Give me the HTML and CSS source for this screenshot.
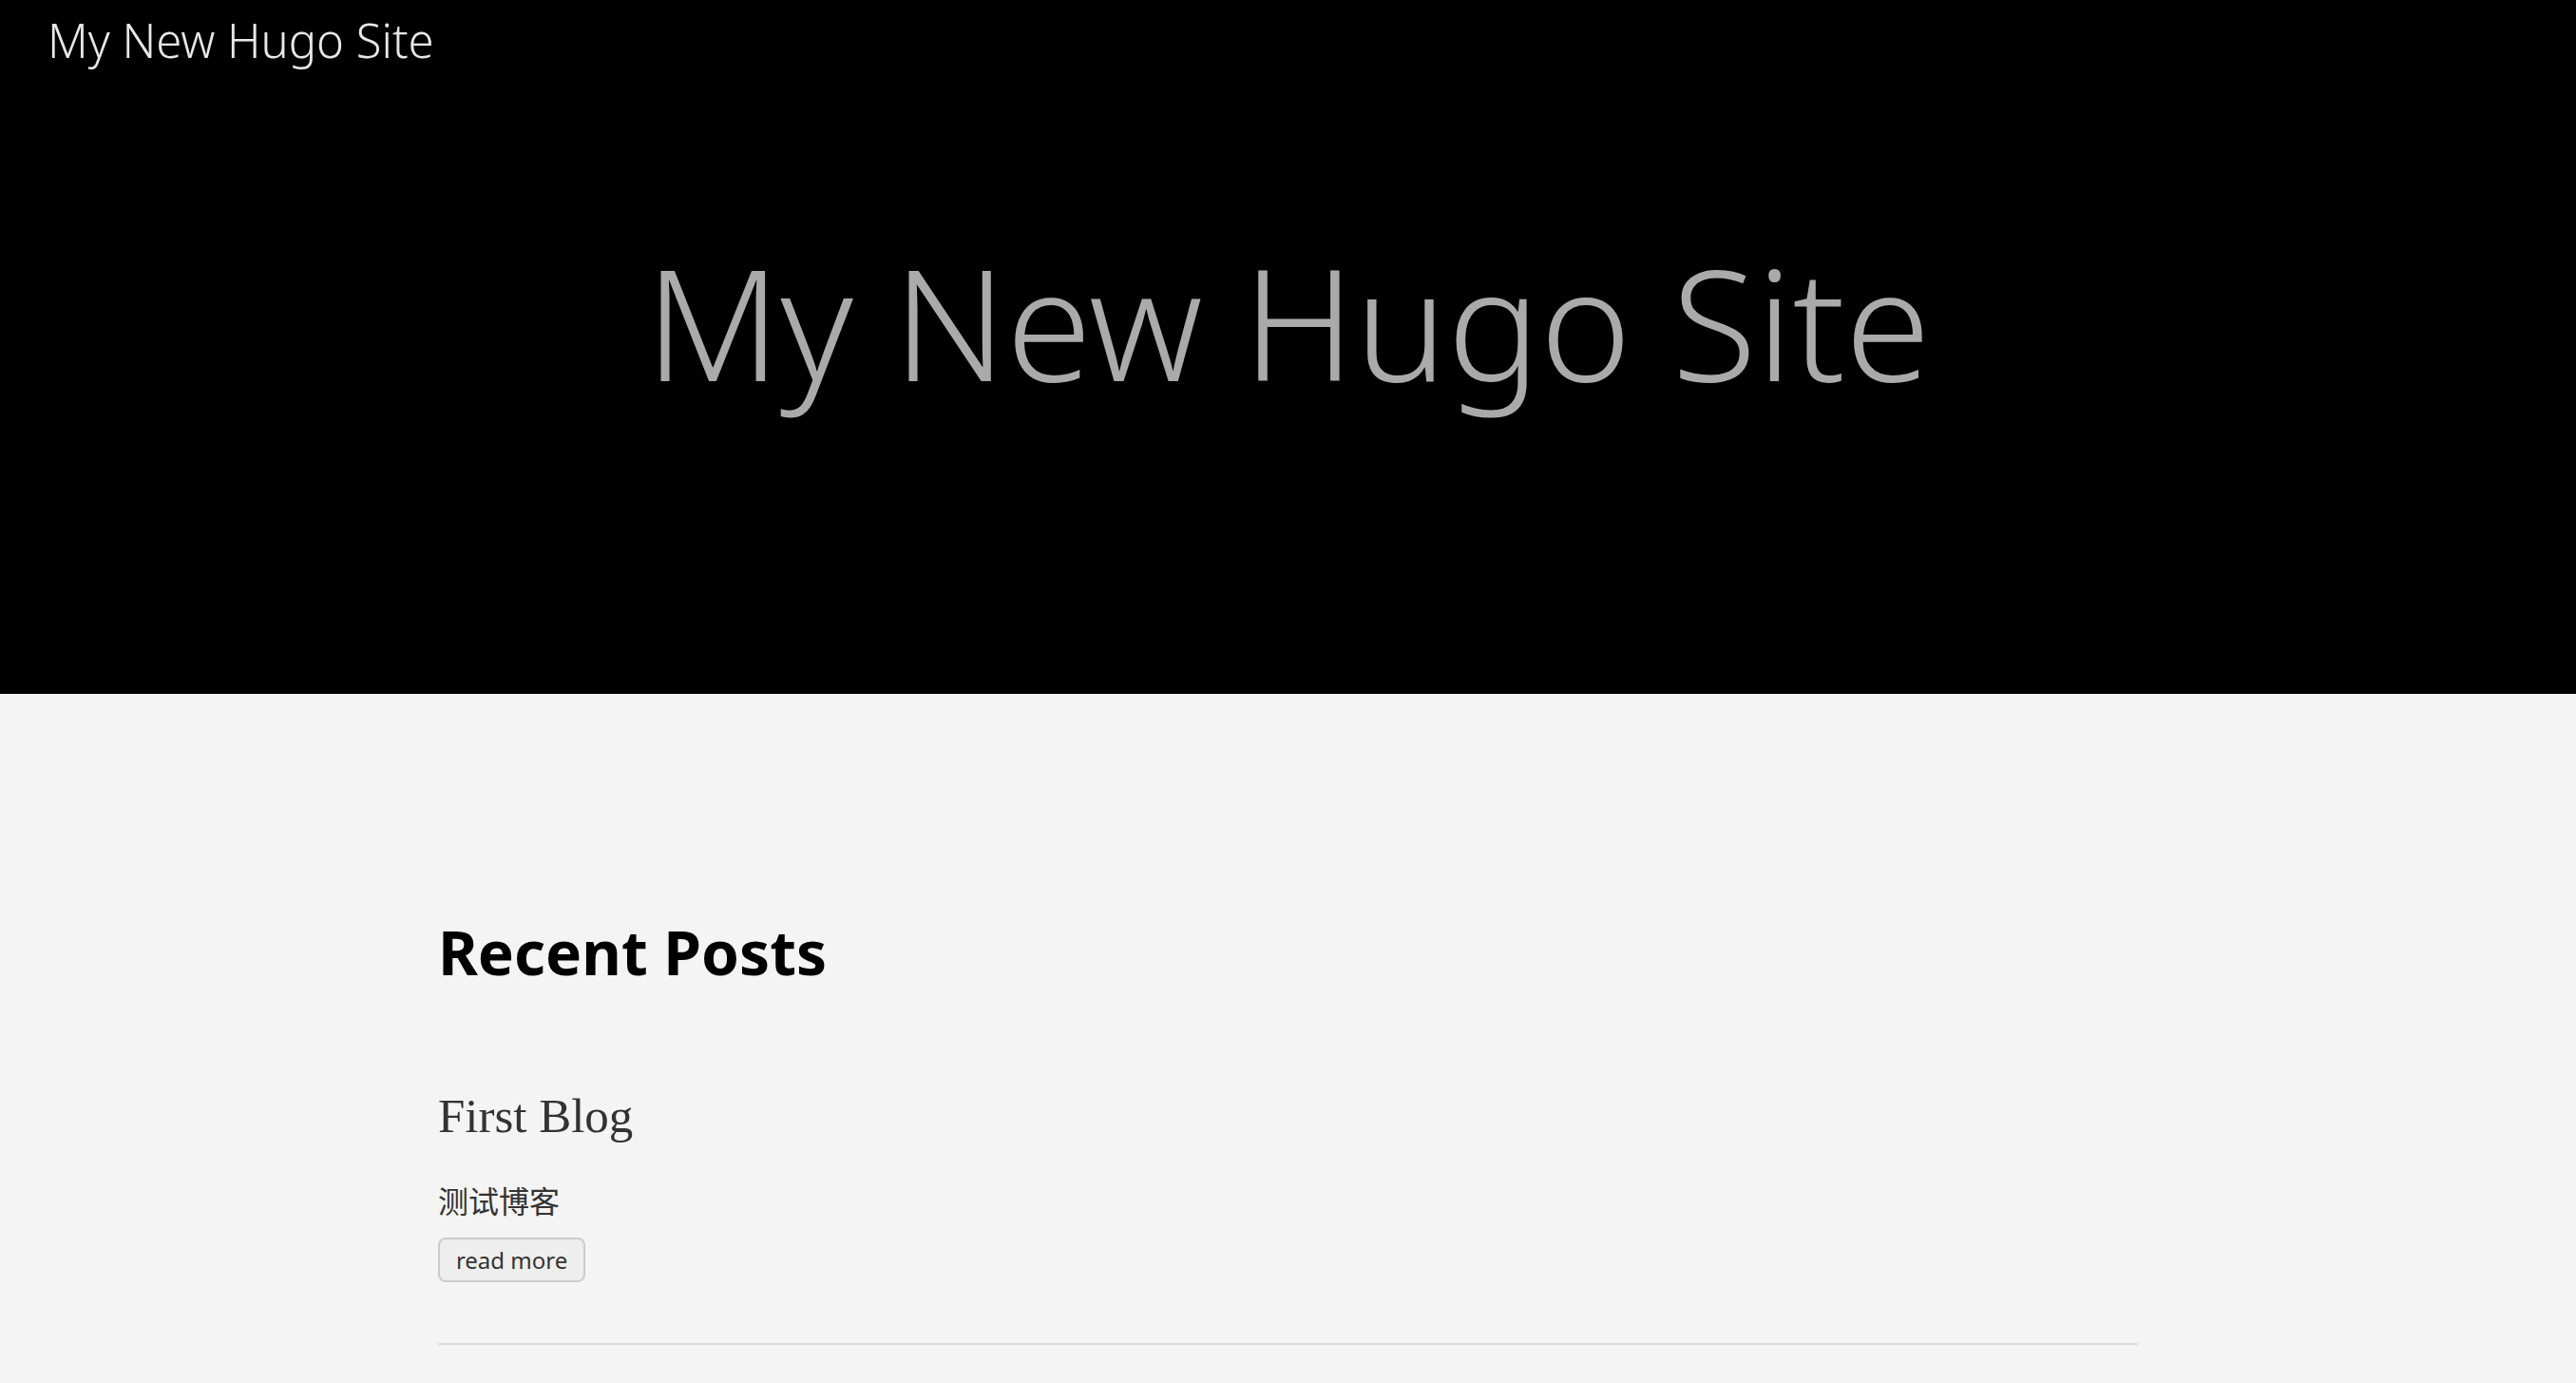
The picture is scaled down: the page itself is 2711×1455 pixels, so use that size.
FILE: index.html
```html
<!DOCTYPE html>
<html lang="en">
<head>
<meta charset="utf-8">
<title>My New Hugo Site</title>
<link rel="stylesheet" href="styles.css">
</head>
<body>
<header class="site-header">
  <nav class="site-nav"><a class="site-name" href="#">My New Hugo Site</a></nav>
  <h1 class="site-title">My New Hugo Site</h1>
</header>
<main class="posts">
  <h2 class="section-title">Recent Posts</h2>
  <article class="post">
    <h3 class="post-title"><a href="#">First Blog</a></h3>
    <p class="summary" lang="zh-CN">测试博客</p>
    <a class="read-more" href="#">read more</a>
  </article>
</main>
</body>
</html>
```
FILE: styles.css
```css
* { box-sizing: border-box; }
body {
  margin: 0;
  background: #f4f4f4;
  color: #333;
  font-family: "Noto Sans", "Open Sans", "Noto Sans CJK SC", sans-serif;
}
a { color: inherit; text-decoration: none; }
.site-header { background: #000; padding-bottom: 272px; }
.site-nav { padding: 10px 50px; }
.site-name {
  display: block;
  color: #e8e8e8;
  font-size: 49px;
  font-weight: 300;
  line-height: 64px;
}
.site-title {
  margin: 134px 0 0;
  color: #aaa;
  font-size: 163px;
  font-weight: 300;
  line-height: 240px;
  text-align: center;
}
.posts { width: 66%; margin: 0 auto; padding-top: 230px; }
.section-title {
  margin: 0;
  color: #000;
  font-size: 64px;
  font-weight: 700;
  line-height: 84px;
}
.post { padding: 100px 0 64px; border-bottom: 2px solid #dbdbdb; }
.post-title {
  margin: 0 0 36px;
  font-family: "Liberation Serif", serif;
  font-size: 51px;
  font-weight: 400;
  line-height: 60px;
}
.summary { margin: 0 0 14px; font-size: 32px; line-height: 48px; }
.read-more {
  display: inline-block;
  padding: 0 17px;
  border: 2px solid #ccc;
  border-radius: 8px;
  background: #eee;
  font-size: 24px;
  line-height: 43px;
}
```
